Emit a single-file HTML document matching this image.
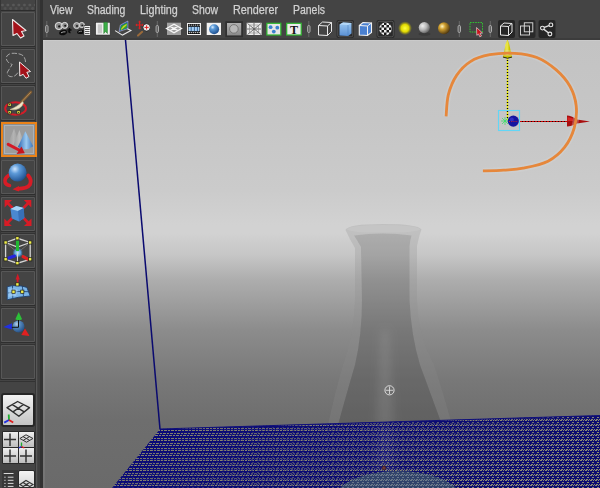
<!DOCTYPE html>
<html><head><meta charset="utf-8">
<style>
*{margin:0;padding:0;box-sizing:border-box}
html,body{width:600px;height:488px;overflow:hidden;background:#444;font-family:"Liberation Sans",sans-serif;position:relative}
.abs{position:absolute}
#menu span{position:absolute;top:2.5px;font-size:12px;color:#d2d2d2;-webkit-text-stroke:0.25px #d2d2d2;line-height:14px;white-space:nowrap;transform:scaleX(0.87);transform-origin:0 0}
#vp{position:absolute;left:43px;top:40px;width:557px;height:448px;overflow:hidden;
 background:linear-gradient(to bottom,#c3c3c3 0px,#c6c6c6 80px,#cbcbcb 150px,#d2d2d2 185px,#d2d2d2 193px,#c6c6c6 215px,#adadad 240px,#8c8c8c 290px,#787878 340px,#6e6e6e 380px,#6a6a6a 448px)}
.lb{position:absolute;left:1px;width:35px;height:35px;border:1px solid #5c5c5c;background:#444;box-shadow:inset 0 0 0 1px #393939}
.lb svg{position:absolute;left:0;top:0}
</style></head><body>
<!-- left toolbar -->
<div class="abs" style="left:0;top:0;width:43px;height:488px;background:#444"></div>
<div class="abs" style="left:0;top:3px;width:36px;height:7px;background:radial-gradient(circle at 2.5px 2px,#585858 0 1.1px,transparent 1.7px) 0 0/5.5px 7px,radial-gradient(circle at 2.5px 5.5px,#525252 0 1.1px,transparent 1.7px) 2.7px 0/5.5px 7px"></div>
<div class="abs" style="left:0;top:10px;width:36px;height:1px;background:#2c2c2c"></div>
<div class="abs" style="left:35px;top:0;width:1px;height:488px;background:#363636"></div>
<div class="abs" style="left:36px;top:0;width:1px;height:488px;background:#575757"></div>
<div class="abs" style="left:38px;top:0;width:2px;height:488px;background:#3e3e3e"></div>
<div class="abs" style="left:40px;top:0;width:3px;height:488px;background:#323232"></div>
<div class="abs" style="left:1px;top:12px;width:34px;height:34px;border:1px solid #575757;border-radius:1px;background:#444"></div>
<div class="abs" style="left:0;top:46px;width:35px;height:1px;background:#2e2e2e"></div>
<div class="abs" style="left:0;top:48px;width:35px;height:1px;background:#333"></div>
<div class="abs" style="left:1px;top:49px;width:34px;height:34px;border:1px solid #575757;border-radius:1px;background:#444"></div>
<div class="abs" style="left:0;top:83px;width:35px;height:1px;background:#2e2e2e"></div>
<div class="abs" style="left:0;top:85px;width:35px;height:1px;background:#333"></div>
<div class="abs" style="left:1px;top:86px;width:34px;height:34px;border:1px solid #575757;border-radius:1px;background:#444"></div>
<div class="abs" style="left:0;top:120px;width:35px;height:1px;background:#2e2e2e"></div>
<div class="abs" style="left:0;top:122px;width:35px;height:1px;background:#333"></div>
<div class="abs" style="left:1px;top:122px;width:36px;height:35px;border:2px solid #ea8218;background:#9c9c9c;box-shadow:inset 0 0 0 1px #8c8c8c,inset 0 0 0 2px #aab2ba"></div>
<div class="abs" style="left:1px;top:160px;width:34px;height:34px;border:1px solid #575757;border-radius:1px;background:#444"></div>
<div class="abs" style="left:0;top:194px;width:35px;height:1px;background:#2e2e2e"></div>
<div class="abs" style="left:0;top:196px;width:35px;height:1px;background:#333"></div>
<div class="abs" style="left:1px;top:197px;width:34px;height:34px;border:1px solid #575757;border-radius:1px;background:#444"></div>
<div class="abs" style="left:0;top:231px;width:35px;height:1px;background:#2e2e2e"></div>
<div class="abs" style="left:0;top:233px;width:35px;height:1px;background:#333"></div>
<div class="abs" style="left:1px;top:234px;width:34px;height:34px;border:1px solid #575757;border-radius:1px;background:#444"></div>
<div class="abs" style="left:0;top:268px;width:35px;height:1px;background:#2e2e2e"></div>
<div class="abs" style="left:0;top:270px;width:35px;height:1px;background:#333"></div>
<div class="abs" style="left:1px;top:271px;width:34px;height:34px;border:1px solid #575757;border-radius:1px;background:#444"></div>
<div class="abs" style="left:0;top:305px;width:35px;height:1px;background:#2e2e2e"></div>
<div class="abs" style="left:0;top:307px;width:35px;height:1px;background:#333"></div>
<div class="abs" style="left:1px;top:308px;width:34px;height:34px;border:1px solid #575757;border-radius:1px;background:#444"></div>
<div class="abs" style="left:0;top:342px;width:35px;height:1px;background:#2e2e2e"></div>
<div class="abs" style="left:0;top:344px;width:35px;height:1px;background:#333"></div>
<div class="abs" style="left:1px;top:345px;width:34px;height:34px;border:1px solid #575757;border-radius:1px;background:#444"></div>
<div class="abs" style="left:0;top:379px;width:35px;height:1px;background:#2e2e2e"></div>
<div class="abs" style="left:0;top:381px;width:35px;height:1px;background:#333"></div>
<div class="abs" style="left:0;top:0;width:1px;height:380px;background:#363636"></div>
<div class="abs" style="left:1px;top:393px;width:34px;height:34px;border:2px solid #262626;border-radius:3px;background:linear-gradient(#f2f2f2,#c4c4c4)"></div>
<div class="abs" style="left:2px;top:431px;width:17px;height:17px;border:1px solid #2a2a2a;border-radius:1px;background:linear-gradient(#efefef,#bdbdbd)"></div>
<div class="abs" style="left:18px;top:431px;width:17px;height:17px;border:1px solid #2a2a2a;border-radius:1px;background:linear-gradient(#efefef,#bdbdbd)"></div>
<div class="abs" style="left:2px;top:447px;width:17px;height:17px;border:1px solid #2a2a2a;border-radius:1px;background:linear-gradient(#efefef,#bdbdbd)"></div>
<div class="abs" style="left:18px;top:447px;width:17px;height:17px;border:1px solid #2a2a2a;border-radius:1px;background:linear-gradient(#efefef,#bdbdbd)"></div>
<div class="abs" style="left:2px;top:470px;width:16px;height:18px;background:#383838"></div>
<div class="abs" style="left:18px;top:470px;width:17px;height:18px;border:1px solid #2a2a2a;border-radius:2px;background:linear-gradient(#f4f4f4,#d4d4d4)"></div>
<svg class="abs" style="left:0;top:0" width="43" height="488" viewBox="0 0 43 488">
<defs>
<radialGradient id="bsph" cx="0.35" cy="0.3" r="0.75"><stop offset="0" stop-color="#cfe6ff"/><stop offset="0.35" stop-color="#5d9ad8"/><stop offset="1" stop-color="#1d4f8f"/></radialGradient>
<linearGradient id="bcone" x1="0" y1="0" x2="1" y2="0"><stop offset="0" stop-color="#2a64b0"/><stop offset="0.55" stop-color="#9ccaf0"/><stop offset="1" stop-color="#3a74bc"/></linearGradient>
<linearGradient id="gcone" x1="0" y1="0" x2="1" y2="0"><stop offset="0" stop-color="#8a8a8a"/><stop offset="0.5" stop-color="#d0d0d0"/><stop offset="1" stop-color="#8a8a8a"/></linearGradient>
</defs>
<!-- b1 arrow -->
<path d="M12.5,19.5 L26,30.5 L21.5,31.5 L24,36 L20.5,38 L17,33.5 L13,35.5 Z" fill="#a4121a" stroke="#f0ecec" stroke-width="1.1" stroke-linejoin="round"/>
<!-- b2 lasso -->
<path d="M17.8,72.7 Q15,77.5 10,76.5 Q6.5,75 7.5,72 L12.2,64.4 Q7,63 6.1,58 Q7,54 12,53.3 Q20,53 23.5,56 Q26,60 25.4,63" fill="none" stroke="#b0b0b0" stroke-width="0.9" stroke-dasharray="5 1.8"/>
<path d="M19.5,62 L30.5,71.5 L26.8,72.3 L29,76.5 L26,78.3 L23.2,74.3 L19.8,76 Z" fill="#a4121a" stroke="#f0ecec" stroke-width="1" stroke-linejoin="round"/>
<!-- b3 brush -->
<ellipse cx="15.6" cy="108.5" rx="10.4" ry="6.2" fill="none" stroke="#d41c28" stroke-width="2"/>
<path d="M30.9,92 L21.5,102" stroke="#7a5a34" stroke-width="2.8" stroke-linecap="round"/>
<path d="M30.5,92.5 L22.5,101" stroke="#b08a58" stroke-width="1" stroke-linecap="round"/>
<path d="M22.5,101.5 Q20,104 17,106 Q13,108.5 10,109.5 Q15,110.5 19,108.5 Q22.5,106.5 23.5,103 Z" fill="#ece6c8" stroke="#bdb48c" stroke-width="0.6"/>
<g fill="#f2f04a" stroke="#1a1a1a" stroke-width="0.7">
<rect x="8" y="103.1" width="3.2" height="3.2"/><rect x="8" y="110.7" width="3.2" height="3.2"/><rect x="16.9" y="110.7" width="3.2" height="3.2"/>
</g>
<g fill="#222"><circle cx="9.6" cy="104.7" r="0.6"/><circle cx="9.6" cy="112.3" r="0.6"/><circle cx="18.5" cy="112.3" r="0.6"/></g>
<!-- b4 cones -->
<path d="M14.1,128.6 L7,146 Q13.5,149 20,146 Z" fill="url(#gcone)" opacity="0.45"/>
<path d="M19.4,129.9 L13,146.5 Q19,149.5 25.5,146.5 Z" fill="url(#gcone)" opacity="0.65"/>
<path d="M25.3,131.2 L17.8,147 Q26,152 33.2,146.3 Z" fill="url(#bcone)"/>
<path d="M8.2,144.3 L20,150.5" stroke="#d41a26" stroke-width="3" stroke-linecap="round"/>
<path d="M16.5,154 L24.8,153.2 L21.5,146.5 Z" fill="#c8141e"/>
<!-- b5 rotate -->
<path d="M8.5,175.5 Q4,178.5 5.2,182.5 Q6.2,185 9.5,185.5" fill="none" stroke="#d81c26" stroke-width="3.6" stroke-linecap="round"/>
<path d="M28.2,175.5 Q32,180 30,184.5 Q27.5,188.5 18,188.8" fill="none" stroke="#d81c26" stroke-width="3.8" stroke-linecap="round"/>
<path d="M19,186 L12.5,189.2 L19,191.5 Z" fill="#d81c26"/>
<circle cx="17.6" cy="172.6" r="9" fill="url(#bsph)"/>
<!-- b6 scale -->
<g fill="#d81c26">
<path d="M4.6,200 L12,200 L4.6,207.5 Z"/><path d="M7,202.5 L12.5,208" stroke="#d81c26" stroke-width="2.6"/>
<path d="M31.3,200 L23.8,200 L31.3,207.5 Z"/><path d="M28.8,202.5 L23.3,208" stroke="#d81c26" stroke-width="2.6"/>
<path d="M4.3,226 L4.3,218.5 L11.8,226 Z"/><path d="M6.8,223.5 L12.3,218" stroke="#d81c26" stroke-width="2.6"/>
<path d="M31.5,226 L31.5,218.5 L24,226 Z"/><path d="M29,223.5 L23.5,218" stroke="#d81c26" stroke-width="2.6"/>
</g>
<path d="M10.5,209 L16.4,206 L23.8,208 L24.3,218 L19,221.5 L11.8,218.6 Z" fill="#4a88d0"/>
<path d="M10.5,209 L16.4,206 L23.8,208 L18,211 Z" fill="#a8d4f6"/>
<path d="M18,211 L23.8,208 L24.3,218 L19,221.5 Z" fill="#3870b8"/>
<!-- b7 universal -->
<radialGradient id="lsph" cx="0.5" cy="0.5" r="0.5"><stop offset="0" stop-color="#b8e4ff"/><stop offset="0.6" stop-color="#5aa0d8"/><stop offset="1" stop-color="#3a6a9a" stop-opacity="0.3"/></radialGradient>
<g stroke="#d4d4d4" stroke-width="1.3" fill="none">
<path d="M5.6,242.5 L17.4,238.3 L30.2,242.5 L30.2,259.3 L17.4,263.2 L5.6,259.3 Z"/>
<path d="M5.6,242.5 L17.4,247 L30.2,242.5"/>
</g>
<g stroke="#888" stroke-width="0.6"><path d="M5.6,242.5 L17.6,252.7 M30.2,242.5 L17.6,252.7 M5.6,259.3 L17.6,252.7 M30.2,259.3 L17.6,252.7"/></g>
<circle cx="17.7" cy="252.7" r="5" fill="url(#lsph)"/>
<path d="M17.6,252.7 L17.4,263" stroke="#d8d8d8" stroke-width="1"/>
<path d="M17.5,240.5 L17.5,251" stroke="#22b834" stroke-width="3"/>
<path d="M8.6,258 L14.5,256" stroke="#2424e0" stroke-width="3" stroke-linecap="round"/>
<path d="M23,256.6 L28.2,259.3" stroke="#e02020" stroke-width="3" stroke-linecap="round"/>
<g fill="#f2f04a" stroke="#1a1a1a" stroke-width="0.7">
<rect x="4" y="240.9" width="3.2" height="3.2"/><rect x="15.8" y="236.7" width="3.2" height="3.2"/><rect x="28.6" y="240.9" width="3.2" height="3.2"/>
<rect x="4" y="257.7" width="3.2" height="3.2"/><rect x="15.8" y="261.6" width="3.2" height="3.2"/><rect x="28.6" y="257.7" width="3.2" height="3.2"/>
</g>
<!-- b8 surface -->
<path d="M7.2,286.7 Q17,284 26.9,287.4 L30.2,296 Q19,296.5 7.2,299.8 Z" fill="#7ab4e8" stroke="#20406a" stroke-width="0.9"/>
<path d="M12.5,286 L12.8,298.5 M22.3,286 L23.5,296.3 M8,293 Q18,290.5 28.5,291.7" stroke="#1a3a66" stroke-width="0.8" fill="none"/>
<path d="M8.5,289 Q14,287 18,290 L16,296 Q11,296 8.5,297 Z" fill="#a8d4f8" opacity="0.6"/>
<path d="M17.6,284 L17.6,278.5" stroke="#d41a26" stroke-width="1.8"/>
<path d="M15.6,279.5 L17.7,273.6 L19.8,279.5 Z" fill="#d41a26"/>
<g fill="#f2f04a" stroke="#1a1a1a" stroke-width="0.7">
<rect x="15.8" y="282.8" width="3.2" height="3.2"/><rect x="11.9" y="290.1" width="3.2" height="3.2"/><rect x="20.7" y="290.1" width="3.2" height="3.2"/>
</g>
<!-- b9 move -->
<circle cx="18.5" cy="326.5" r="6" fill="url(#bsph)" opacity="0.85"/>
<path d="M18.7,311.9 L15.3,319.3 Q18.7,321.5 22.1,319.3 Z" fill="#2cc038"/>
<path d="M3.3,327 L12,323.2 L12,329.6 Z" fill="#2030e0"/>
<path d="M21.3,335 L25,328.5 L29.6,336 Z" fill="#e02020"/>
<path d="M18.5,320 L18.5,327.3 L11.8,327.3" stroke="#111" stroke-width="1" fill="none"/>
<!-- bottom buttons -->
<g stroke="#2e2e2e" stroke-width="1.4" fill="none" stroke-linejoin="round">
<path d="M7,407.6 L17.6,401.5 L29.5,407.6 L18.9,416.2 Z M12.3,404.6 L24.2,411.9 M23.5,404.5 L13,411.9"/>
</g>
<path d="M9,420 L8.7,414.5" stroke="#20b030" stroke-width="1.8"/><path d="M9,420 L4.2,422.6" stroke="#2030e0" stroke-width="1.8"/><path d="M9,420 L13.2,422.6" stroke="#e02020" stroke-width="1.8"/>
<g stroke="#333" stroke-width="1.5"><path d="M10,433.5 V446 M4,439.5 H16 M10,449.5 V462.5 M4,456 H16 M26,449.5 V462.5 M20,456 H32"/></g>
<g stroke="#333" stroke-width="1" fill="none"><path d="M19.9,438.5 L26,434.8 L33,438.5 L26.5,442.2 Z M23,436.6 L29.7,440.4 M29.5,436.6 L23.2,440.4"/></g>
<path d="M21.5,446.5 L21.5,442.5" stroke="#20b030" stroke-width="1.3"/><path d="M21.5,446.5 L18.8,448" stroke="#2030e0" stroke-width="1.3"/><path d="M21.5,446.5 L24.3,448" stroke="#e02020" stroke-width="1.3"/>
<g stroke="#d8d8d8" stroke-width="1"><path d="M3.7,473.5 H13.5 M7.8,477.2 H13.5 M7.8,480.3 H13.5 M7.8,483.4 H13.5 M7.8,486.4 H13.5 M4.3,477.2 H5.6 M4.3,480.3 H5.6 M4.3,483.4 H5.6 M4.3,486.4 H5.6"/></g>
<g stroke="#333" stroke-width="1.1" fill="none"><path d="M19.9,484.5 L26,480.5 L33,484.5 L26.5,488.5 Z M23,482.5 L29.7,486.5 M29.5,482.5 L23.2,486.5"/></g>
</svg>

<!-- menu -->
<div id="menu">
<span style="left:50px">View</span>
<span style="left:87px">Shading</span>
<span style="left:139.5px;transform:scaleX(0.9)">Lighting</span>
<span style="left:192px">Show</span>
<span style="left:233px;transform:scaleX(0.9)">Renderer</span>
<span style="left:293px">Panels</span>
</div>

<svg class="abs" style="left:43px;top:16px" width="557" height="24" viewBox="43 16 557 24">
<defs>
<radialGradient id="tsph" cx="0.35" cy="0.3" r="0.75"><stop offset="0" stop-color="#d8ecff"/><stop offset="0.3" stop-color="#5a9ad8"/><stop offset="1" stop-color="#1a4a8a"/></radialGradient>
<radialGradient id="ysph" cx="0.5" cy="0.5" r="0.5"><stop offset="0" stop-color="#ffff40"/><stop offset="0.55" stop-color="#e0d800"/><stop offset="1" stop-color="#a09a10" stop-opacity="0"/></radialGradient>
<radialGradient id="gsph" cx="0.35" cy="0.35" r="0.7"><stop offset="0" stop-color="#f0f0f0"/><stop offset="0.5" stop-color="#b8b8b8"/><stop offset="1" stop-color="#606060"/></radialGradient>
<radialGradient id="ausph" cx="0.35" cy="0.35" r="0.7"><stop offset="0" stop-color="#fff4c0"/><stop offset="0.35" stop-color="#d0a030"/><stop offset="1" stop-color="#4a3410"/></radialGradient>
<linearGradient id="press" x1="0" y1="0" x2="0" y2="1"><stop offset="0" stop-color="#b0b0b0"/><stop offset="1" stop-color="#8a8a8a"/></linearGradient>
</defs>
<!-- separators -->
<g stroke="#b8b8b8" fill="none">
<g id="sep"><path d="M46.8,21 V37" stroke-width="0.7" stroke="#7a7a7a"/><rect x="45.6" y="25.5" width="2.4" height="7" rx="1.2" stroke-width="0.9"/></g>
<g transform="translate(110.5,0)"><path d="M46.8,21 V37" stroke-width="0.7" stroke="#7a7a7a"/><rect x="45.6" y="25.5" width="2.4" height="7" rx="1.2" stroke-width="0.9"/></g>
<g transform="translate(262,0)"><path d="M46.8,21 V37" stroke-width="0.7" stroke="#7a7a7a"/><rect x="45.6" y="25.5" width="2.4" height="7" rx="1.2" stroke-width="0.9"/></g>
<g transform="translate(412.5,0)"><path d="M46.8,21 V37" stroke-width="0.7" stroke="#7a7a7a"/><rect x="45.6" y="25.5" width="2.4" height="7" rx="1.2" stroke-width="0.9"/></g>
<g transform="translate(443.5,0)"><path d="M46.8,21 V37" stroke-width="0.7" stroke="#7a7a7a"/><rect x="45.6" y="25.5" width="2.4" height="7" rx="1.2" stroke-width="0.9"/></g>
</g>
<!-- camera 1 -->
<g stroke="#e6e6e6" stroke-width="1"><circle cx="58.8" cy="26" r="3.6" fill="#8a8a8a"/><circle cx="64.7" cy="25.4" r="3" fill="#8a8a8a"/></g>
<circle cx="59.2" cy="26.4" r="1.1" fill="#111"/><circle cx="65.2" cy="25.8" r="1" fill="#111"/>
<path d="M59,33 Q60,29.8 64.5,29.8 Q67.5,30 67.2,32.5 Q66,35.5 61.5,35.3 Q59,35 59,33 Z" fill="#0c0c0c"/>
<path d="M61,32.8 Q63,31.6 65.5,31.8" stroke="#c8c8c8" stroke-width="0.8" fill="none"/>
<path d="M67.5,30 L71.5,30 M69.5,28 V32 M68,31.5 L70.5,33" stroke="#0c0c0c" stroke-width="1.3"/>
<!-- camera 2 -->
<g stroke="#e0e0e0" stroke-width="0.9"><circle cx="76.6" cy="25.6" r="3" fill="#8a8a8a"/><circle cx="81.8" cy="25" r="2.6" fill="#8a8a8a"/></g>
<circle cx="77" cy="26" r="0.9" fill="#111"/><circle cx="82.2" cy="25.4" r="0.8" fill="#111"/>
<path d="M77,32 Q78,29.5 81.5,29.5 L83.5,30 L83.5,33.5 Q80,34.5 77.5,33.5 Z" fill="#0c0c0c"/>
<path d="M78.5,32 Q80,31 82,31.2" stroke="#c0c0c0" stroke-width="0.7" fill="none"/>
<rect x="84" y="25.6" width="6.4" height="9.6" fill="#f4f4f4" stroke="#222" stroke-width="0.6"/>
<path d="M85,27.5 H89.5 M85,29.5 H89.5 M85,31.5 H89.5 M85,33.5 H89.5" stroke="#333" stroke-width="0.8"/>
<!-- book -->
<rect x="95.7" y="22.3" width="14.4" height="12.7" fill="#f0f0f0" stroke="#222" stroke-width="0.5"/>
<rect x="97.8" y="24.3" width="4.2" height="9" fill="#c8c8c8"/>
<path d="M103.8,22.3 H107.4 V33.5 L105.6,31.5 L103.8,33.5 Z" fill="#3cb048" stroke="#1a6a20" stroke-width="0.5"/>
<!-- monitor -->
<path d="M115.1,30.6 L122.5,35.1 L130.9,30.6 L126,28" fill="none" stroke="#e8e8e8" stroke-width="1.1"/>
<path d="M119,31.5 L120.4,25 L127.9,21 L127.9,28.6 Z" fill="#2a48c0" stroke="#d8d8e8" stroke-width="0.5"/>
<path d="M120,30.5 L121,25.8 L127.2,22.5 L127.2,28 Z" fill="#28a038"/>
<path d="M121,29 Q123,25.5 126.8,23.8 L126.5,25.5 Q124,27.5 121.5,30 Z" fill="#d0d020"/>
<!-- move zoom -->
<g stroke="#e02020" stroke-width="1.2"><path d="M139.6,21.5 V29 M136,25 H143.2"/></g>
<g fill="#e02020"><path d="M138,22.3 L139.6,20.6 L141.2,22.3 Z M138,27.8 L139.6,29.5 L141.2,27.8 Z M136.9,23.4 L135.3,25 L136.9,26.6 Z M142.3,23.4 L143.9,25 L142.3,26.6 Z"/></g>
<circle cx="146.6" cy="27.4" r="3.7" fill="#ececec" stroke="#1a1a1a" stroke-width="0.8"/>
<path d="M146.6,25.3 V29.5 M144.5,27.4 H148.7" stroke="#e02020" stroke-width="1"/>
<path d="M138,35.6 L142.2,31.8" stroke="#9a6a3a" stroke-width="2" stroke-linecap="round"/>
<!-- grid pressed -->
<rect x="167" y="22.7" width="14" height="12.3" fill="#a0a0a0"/>
<path d="M166.5,28.5 L174,24.3 L181.5,28.5 L174,32.7 Z M170.2,26.4 L177.8,30.6 M177.8,26.4 L170.2,30.6" fill="none" stroke="#f6f6f6" stroke-width="1.3"/>
<!-- film -->
<rect x="187" y="23" width="14" height="12" fill="#f0f0f0"/>
<rect x="188" y="24" width="12" height="10" fill="#0c0c0c"/>
<rect x="188.5" y="26.8" width="11" height="4.4" fill="#a8d0f4"/>
<path d="M191.2,26.8 V31.2 M194.4,26.8 V31.2 M197.4,26.8 V31.2" stroke="#1a4a80" stroke-width="0.8"/>
<g fill="#f0f0f0"><circle cx="189.3" cy="25.1" r="0.65"/><circle cx="191.3" cy="25.1" r="0.65"/><circle cx="193.3" cy="25.1" r="0.65"/><circle cx="195.3" cy="25.1" r="0.65"/><circle cx="197.3" cy="25.1" r="0.65"/><circle cx="199.2" cy="25.1" r="0.65"/>
<circle cx="189.3" cy="32.6" r="0.65"/><circle cx="191.3" cy="32.6" r="0.65"/><circle cx="193.3" cy="32.6" r="0.65"/><circle cx="195.3" cy="32.6" r="0.65"/><circle cx="197.3" cy="32.6" r="0.65"/><circle cx="199.2" cy="32.6" r="0.65"/></g>
<!-- sphere on white -->
<rect x="206.7" y="22.8" width="14.3" height="12.2" fill="#f2f2f2"/>
<circle cx="214.1" cy="29.2" r="5" fill="url(#tsph)"/>
<!-- gray circle pressed -->
<rect x="225.3" y="21.2" width="17.7" height="16" fill="#303030"/>
<rect x="227" y="23" width="14.2" height="12.4" fill="url(#press)"/>
<circle cx="233.9" cy="28.9" r="4.3" fill="#b8b8b8" stroke="#707070" stroke-width="0.9"/>
<!-- xray -->
<rect x="246.7" y="22.8" width="14.9" height="12.2" fill="#ececec"/>
<path d="M247.5,23.5 L261,34.5 M261,23.5 L247.5,34.5 M254,23 V35 M247,29 H261" stroke="#555" stroke-width="0.8"/>
<rect x="249.5" y="25" width="9" height="8" fill="none" stroke="#888" stroke-width="0.6"/>
<!-- green dots -->
<rect x="266.9" y="23.3" width="13.9" height="11.7" fill="#e6e6e6" stroke="#2eb82e" stroke-width="1.2"/>
<circle cx="270.6" cy="27.2" r="1.9" fill="#3a80d0"/><circle cx="277.3" cy="27.7" r="1.9" fill="#3a80d0"/><circle cx="273.8" cy="31.6" r="1.9" fill="#3a80d0"/>
<!-- T -->
<rect x="286.7" y="23.3" width="14.5" height="11.7" fill="#ececec" stroke="#2eb82e" stroke-width="1.2"/>
<text x="294" y="33.8" font-family="Liberation Serif" font-size="12" font-weight="bold" text-anchor="middle" fill="#111">T</text>
<!-- wire cube -->
<g fill="none" stroke="#e8e8e8" stroke-width="1"><path d="M318.5,25.5 L322.5,22 L331.5,22.5 L331.5,31.5 L327.5,35.5 L318.5,35 Z M318.5,25.5 L327.5,26 L331.5,22.5 M327.5,26 V35.5"/></g>
<!-- shaded cube pressed -->
<rect x="336.5" y="20" width="17.5" height="18" fill="#2a2a2a" rx="2"/><rect x="337.8" y="21.3" width="15" height="15.5" fill="none" stroke="#5e5e5e" stroke-width="0.8" rx="1.5"/>
<linearGradient id="cubeg" x1="0" y1="0" x2="0" y2="1"><stop offset="0" stop-color="#9cc8f0"/><stop offset="1" stop-color="#5a90d4"/></linearGradient>
<path d="M339.5,24.5 L343,22.5 L351.5,23 L351.5,33.5 L348,36 L339.5,35.5 Z" fill="url(#cubeg)"/>
<path d="M339.5,24.5 L343,22.5 L351.5,23 L348,25 Z" fill="#b4d8f8"/>
<path d="M348,25 V36" stroke="#4a80c0" stroke-width="0.6"/>
<!-- wire shaded cube -->
<path d="M359.3,25.5 L363,22.5 L371.5,23 L371.5,32.5 L367.5,35.5 L359.3,35 Z" fill="#4a80d0" stroke="#f2f2f2" stroke-width="1.1"/>
<path d="M359.3,25.5 L367.5,26 L371.5,23 M367.5,26 V35.5" fill="none" stroke="#f2f2f2" stroke-width="1"/>
<!-- checker pressed -->
<rect x="376.5" y="20" width="18" height="18" fill="#2a2a2a" rx="2"/><rect x="377.8" y="21.3" width="15.5" height="15.5" fill="none" stroke="#5e5e5e" stroke-width="0.8" rx="1.5"/>
<clipPath id="chk"><circle cx="385.5" cy="28.9" r="6.3"/></clipPath>
<g clip-path="url(#chk)"><rect x="378" y="21" width="16" height="16" fill="#f0f0f0"/>
<path d="M379,22.5 h2.5 v2.5 h-2.5z M384,22.5 h2.5 v2.5 h-2.5z M389,22.5 h2.5 v2.5 h-2.5z M381.5,25 h2.5 v2.5 h-2.5z M386.5,25 h2.5 v2.5 h-2.5z M391.5,25 h2.5 v2.5 h-2.5z M379,27.5 h2.5 v2.5 h-2.5z M384,27.5 h2.5 v2.5 h-2.5z M389,27.5 h2.5 v2.5 h-2.5z M381.5,30 h2.5 v2.5 h-2.5z M386.5,30 h2.5 v2.5 h-2.5z M391.5,30 h2.5 v2.5 h-2.5z M379,32.5 h2.5 v2.5 h-2.5z M384,32.5 h2.5 v2.5 h-2.5z M389,32.5 h2.5 v2.5 h-2.5z" fill="#1a1a1a"/></g>
<!-- lights -->
<circle cx="405" cy="28.2" r="7" fill="url(#ysph)"/>
<ellipse cx="424.5" cy="34" rx="6" ry="1.8" fill="#3a3a3a"/>
<circle cx="424.3" cy="27.6" r="5.6" fill="url(#gsph)"/>
<circle cx="444" cy="28.2" r="6" fill="url(#ausph)"/>
<!-- marquee -->
<rect x="470" y="22.5" width="12.5" height="9.5" fill="none" stroke="#30c030" stroke-width="1" stroke-dasharray="1.6 1"/>
<path d="M476.5,27.5 L482.5,33 L480,33.3 L481.5,36 L479.8,36.8 L478.5,34 L476.8,35.3 Z" fill="#c8141c" stroke="#f0f0f0" stroke-width="0.6"/>
<!-- cube pressed -->
<rect x="498" y="20" width="17" height="18" fill="#262626" rx="2"/>
<g fill="none" stroke="#e6e6e6" stroke-width="1"><path d="M500.5,26 L504,23 L512,23.5 L512,32 L508.5,35.5 L500.5,35 Z M500.5,26 L508.5,26.5 L512,23.5 M508.5,26.5 V35.5"/></g>
<!-- two squares -->
<rect x="518.5" y="20" width="17" height="18" fill="#2a2a2a" rx="2"/>
<rect x="524.3" y="22.8" width="8.5" height="9" fill="none" stroke="#e0e0e0" stroke-width="0.9"/>
<rect x="520.5" y="26" width="9" height="9" fill="none" stroke="#e0e0e0" stroke-width="0.9"/>
<!-- share -->
<rect x="538.5" y="20" width="17" height="18" fill="#262626" rx="2"/>
<path d="M542.4,28.1 L550.9,24.9 M542.4,28.1 L549.9,34" stroke="#e0e0e0" stroke-width="1.4"/>
<g fill="#2a2a2a" stroke="#e8e8e8" stroke-width="1.1"><circle cx="542.4" cy="28.1" r="1.9"/><circle cx="550.9" cy="24.9" r="1.9"/><circle cx="549.9" cy="34" r="1.9"/></g>
</svg>

<div id="vp"><div style="position:absolute;left:0;top:0;width:557px;height:1px;background:rgba(255,255,255,0.12)"></div><div style="position:absolute;left:0;top:0;width:2px;height:448px;background:rgba(255,255,255,0.07)"></div></div>
<div class="abs" style="left:43px;top:38px;width:557px;height:2px;background:#3c3c3c"></div>
<svg class="abs" style="left:0;top:0" width="600" height="488" viewBox="0 0 600 488">
<defs>
<filter id="blur05" x="-10%" y="-10%" width="120%" height="120%"><feGaussianBlur stdDeviation="0.5"/></filter>
<clipPath id="vpc"><rect x="43" y="40" width="557" height="448"/></clipPath>
<pattern id="gp" x="0" y="0" width="7" height="10" patternUnits="userSpaceOnUse">
<rect width="7" height="10" fill="#0a0a78"/>
<g fill="#84846c">
<rect x="0" y="0" width="2" height="1"/><rect x="3" y="0" width="3" height="1"/>
<rect x="2" y="3" width="3" height="1"/><rect x="6" y="3" width="1" height="1"/><rect x="0" y="3" width="1" height="1"/>
<rect x="1" y="5" width="3" height="1"/><rect x="5" y="5" width="2" height="1"/>
<rect x="3" y="8" width="3" height="1"/><rect x="0" y="8" width="2" height="1"/>
</g>
</pattern>
<pattern id="gp2" x="0" y="0" width="5" height="5" patternUnits="userSpaceOnUse">
<rect width="5" height="5" fill="#0c0c70"/>
<g fill="#8a8a74">
<rect x="0" y="0" width="2" height="1"/><rect x="3" y="0" width="1" height="1"/>
<rect x="2" y="2" width="2" height="1"/>
<rect x="1" y="4" width="2" height="1"/><rect x="4" y="4" width="1" height="1"/>
</g>
</pattern>
<linearGradient id="gfade" x1="0" y1="0" x2="1" y2="0.3"><stop offset="0.35" stop-color="#fff" stop-opacity="0"/><stop offset="1" stop-color="#fff" stop-opacity="1"/></linearGradient>
<mask id="gmask"><rect x="0" y="400" width="600" height="88" fill="url(#gfade)"/></mask>
<linearGradient id="fwall" x1="0" y1="0" x2="0" y2="1">
<stop offset="0" stop-color="#b4b4b4"/><stop offset="0.3" stop-color="#a0a0a0"/><stop offset="1" stop-color="#8a8a8a"/>
</linearGradient>
<linearGradient id="fin" x1="0" y1="0" x2="0" y2="1">
<stop offset="0" stop-color="#a2a2a2"/><stop offset="0.3" stop-color="#8e8e8e"/><stop offset="1" stop-color="#747474"/>
</linearGradient>
</defs>
<g clip-path="url(#vpc)">
<!-- flask -->
<path fill-rule="evenodd" d="M345.5,230 Q348,224 383,224 Q418,224 421.5,229.5 Q419,236 417,246 L417,300 Q418,335 434,365 Q443,392 452,425 L328,425 Q335,392 343,365 Q354,335 355,300 L355,248 Q349,238 345.5,230 Z M354,235.5 Q383,231.5 411.5,235.5 Q410,240 409.5,247 L409.5,300 Q411,335 420,365 Q430,392 442,425 L338,425 Q347,392 355,365 Q362,335 362,300 L361,247 Q357,240 354,235.5 Z" fill="#8c8c8c" fill-opacity="0.25"/>
<path d="M354,235.5 Q383,231.5 411.5,235.5 Q410,240 409.5,247 L409.5,300 Q411,335 420,365 Q430,392 442,425 L338,425 Q347,392 355,365 Q362,335 362,300 L361,247 Q357,240 354,235.5 Z" fill="#3a3a3a" fill-opacity="0.245"/>
<path d="M347,229.5 Q349,225 383,225 Q417,225 420.5,229.5 Q414,233 383,232.5 Q352,233 347,229.5 Z" fill="#d0d0d0" fill-opacity="0.3"/>
<filter id="blur4" x="-50%" y="-50%" width="200%" height="200%"><feGaussianBlur stdDeviation="4"/></filter>
<path d="M381,330 L389,330 L394,425 L376,425 Z" fill="#ffffff" fill-opacity="0.09" filter="url(#blur4)"/>
<!-- crosshair -->
<circle cx="389.5" cy="390.3" r="4.6" fill="none" stroke="#e4e4e4" stroke-width="0.9"/>
<path d="M389.5,386.5 V394.1 M385.7,390.3 H393.3" stroke="#e4e4e4" stroke-width="0.8"/>
<!-- blue line -->
<line x1="125.5" y1="40" x2="160" y2="429" stroke="#0a0a70" stroke-width="1.5"/>
<!-- grid -->
<path d="M160,429 L600,415.5 L600,488 L112,488 Z" fill="url(#gp)"/>
<path d="M160,429 L600,415.5 L600,488 L112,488 Z" fill="url(#gp2)" mask="url(#gmask)"/>
<path d="M160,429 L600,415.5" stroke="#10107a" stroke-width="1"/>
<pattern id="ep" x="0" y="0" width="5" height="5" patternUnits="userSpaceOnUse">
<rect width="5" height="5" fill="#34486a"/>
<g fill="#6a7a8c"><rect x="0" y="0" width="2" height="1"/><rect x="3" y="0" width="1" height="1"/><rect x="2" y="2" width="2" height="1"/><rect x="1" y="4" width="2" height="1"/><rect x="4" y="4" width="1" height="1"/></g>
</pattern>
<ellipse cx="398" cy="503" rx="66" ry="32" fill="url(#ep)" opacity="0.9"/>
<path d="M380,426 L390,426 L393,470 L377,470 Z" fill="#ffffff" fill-opacity="0.08" filter="url(#blur4)"/>
<circle cx="384" cy="468" r="2" fill="#7a3a28" stroke="#301010" stroke-width="0.6" opacity="0.85"/>
<!-- manipulator -->

<line x1="507.5" y1="57" x2="507.5" y2="120" stroke="#f0f000" stroke-width="1.3"/>
<line x1="507.5" y1="57" x2="507.5" y2="120" stroke="#000" stroke-width="1.3" stroke-dasharray="1 2"/>
<path d="M502.8,57.5 Q503,53 504.5,50 L505.8,44 L507.5,39.5 L509.2,44 L510.5,50 Q512,53 512.2,57.5 Q507.5,59 502.8,57.5 Z" fill="#ccc400"/>
<path d="M505,45 L507.5,40 L508.5,44 L508.5,55 L505.5,55 Z" fill="#f4f060" opacity="0.7"/>
<path d="M503,57 Q507.5,59.5 512,57" stroke="#222" stroke-width="1" fill="none"/>

<line x1="519" y1="121.5" x2="567" y2="121.5" stroke="#d00000" stroke-width="1.2"/>
<line x1="519" y1="121.5" x2="567" y2="121.5" stroke="#200000" stroke-width="1.2" stroke-dasharray="1 2"/>
<path d="M567,115.5 Q571,115.5 577,119.5 L590,121.5 L577,123.5 Q571,126.5 567,126.5 Z" fill="#a80e0e"/>
<path d="M567.5,117 L573,118.5 L573,121 L567.5,121 Z" fill="#e02a2a" opacity="0.8"/>
<rect x="498.5" y="110.5" width="21" height="20" fill="none" stroke="#62d6f6" stroke-width="1.1"/>
<path d="M501,121 H509 M505,117 V125 M502,118 L508,124 M508,118 L502,124" stroke="#30e060" stroke-width="0.7"/>
<circle cx="513.3" cy="121.1" r="5.6" fill="#1414a0"/>
<circle cx="511.8" cy="119.6" r="2" fill="#3c3cd0" opacity="0.7"/>
<line x1="509" y1="121.5" x2="518" y2="121.5" stroke="#e02020" stroke-width="0.9" stroke-dasharray="1 1.2"/>
<path d="M446.1,116.4 C446.5,112.8 446.6,101.6 448.3,94.8 C450.1,88.0 452.9,80.9 456.6,75.4 C460.3,69.9 464.9,65.0 470.4,61.6 C475.9,58.1 482.4,56.1 489.8,54.7 C497.2,53.3 506.9,52.8 514.7,53.3 C522.6,53.8 530.0,54.7 536.9,57.5 C543.8,60.3 550.7,65.1 556.2,69.9 C561.7,74.7 566.8,80.5 570.1,86.5 C573.4,92.5 575.5,99.0 576.2,105.9 C576.9,112.8 576.2,121.1 574.2,128.0 C572.2,134.9 568.9,141.9 564.5,147.4 C560.1,152.9 554.9,157.7 548.0,161.2 C541.1,164.7 530.4,166.7 523.0,168.2 C515.6,169.7 510.4,169.6 503.7,170.1 C497.0,170.6 486.4,170.8 482.9,170.9" fill="none" stroke="#d8d8d8" stroke-width="6" opacity="0.3" filter="url(#blur05)"/>
<path d="M446.1,116.4 C446.5,112.8 446.6,101.6 448.3,94.8 C450.1,88.0 452.9,80.9 456.6,75.4 C460.3,69.9 464.9,65.0 470.4,61.6 C475.9,58.1 482.4,56.1 489.8,54.7 C497.2,53.3 506.9,52.8 514.7,53.3 C522.6,53.8 530.0,54.7 536.9,57.5 C543.8,60.3 550.7,65.1 556.2,69.9 C561.7,74.7 566.8,80.5 570.1,86.5 C573.4,92.5 575.5,99.0 576.2,105.9 C576.9,112.8 576.2,121.1 574.2,128.0 C572.2,134.9 568.9,141.9 564.5,147.4 C560.1,152.9 554.9,157.7 548.0,161.2 C541.1,164.7 530.4,166.7 523.0,168.2 C515.6,169.7 510.4,169.6 503.7,170.1 C497.0,170.6 486.4,170.8 482.9,170.9" fill="none" stroke="#e6873a" stroke-width="2.8" filter="url(#blur05)"/>
</g>
</svg>

</body></html>
